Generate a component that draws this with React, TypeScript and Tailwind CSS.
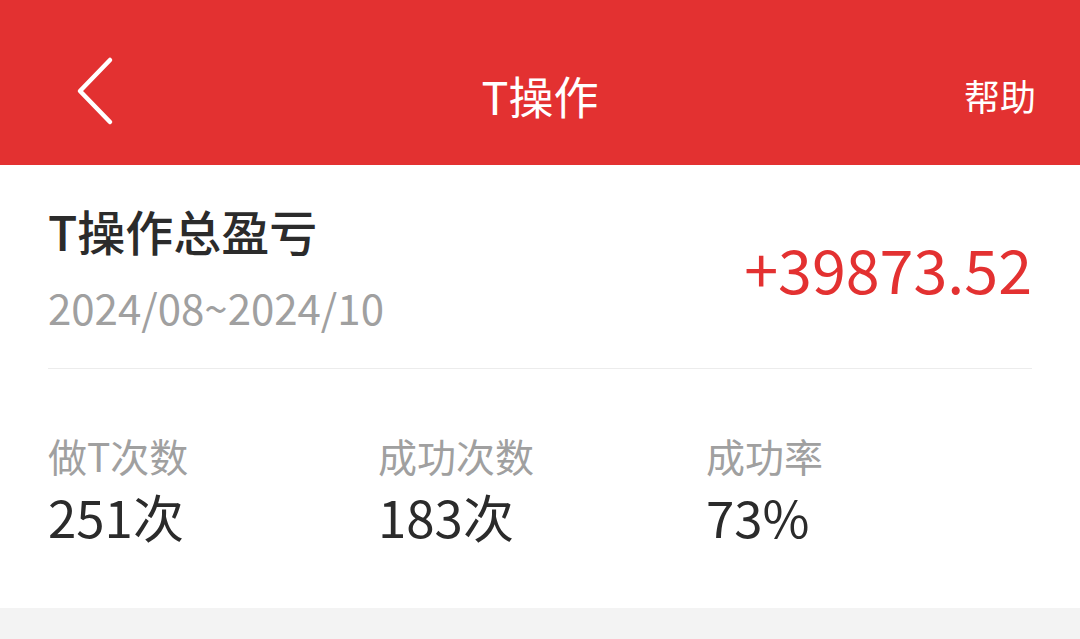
const font = { fontFamily: '"Noto Sans CJK SC", "Noto Sans", sans-serif' };

const stats = [
  { label: "做T次数", value: "251次" },
  { label: "成功次数", value: "183次" },
  { label: "成功率", value: "73%" },
];

export default function App() {
  return (
    <div className="w-[1080px] h-[639px] bg-[#f3f3f3] overflow-hidden" style={font}>
      <header className="h-[165px] bg-[#e33131] flex items-center pt-[24px] px-[48px] relative text-white">
        <svg width="50" height="70" viewBox="0 0 50 70" className="ml-[22px] -mt-[8px]" fill="none">
          <path d="M40 4 L10 35 L40 66" stroke="white" strokeWidth="4.5" strokeLinecap="round" strokeLinejoin="round" />
        </svg>
        <h1 className="absolute left-1/2 -translate-x-1/2 mt-[2px] text-[45px] leading-none">T操作</h1>
        <span className="ml-auto text-[36px] leading-none -mr-[4px]">帮助</span>
      </header>

      <section className="bg-white h-[443px] px-[48px]">
        <div className="flex items-center justify-between h-[204px] border-b border-[#ececec]">
          <div className="flex flex-col gap-[32px]">
            <div className="text-[48px] leading-none text-[#2b2b2b] font-medium">T操作总盈亏</div>
            <div className="text-[42px] leading-none text-[#a0a0a0]">2024/08~2024/10</div>
          </div>
          <div className="text-[61px] leading-none text-[#e33131] pt-[2px]">+39873.52</div>
        </div>

        <div className="grid grid-cols-[330px_328px_1fr] pt-[67px]">
          {stats.map((s) => (
            <div key={s.label} className="flex flex-col gap-[16px]">
              <div className="text-[39px] leading-none text-[#a0a0a0]">{s.label}</div>
              <div className="text-[51px] leading-none text-[#2b2b2b]">{s.value}</div>
            </div>
          ))}
        </div>
      </section>
    </div>
  );
}
